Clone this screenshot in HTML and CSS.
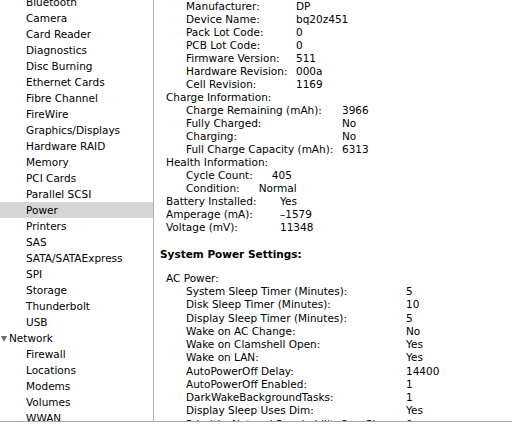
FILE: index.html
```html
<!DOCTYPE html>
<html>
<head>
<meta charset="utf-8">
<link rel="stylesheet" href="styles.css">
</head>
<body>
<div class="window">
  <ul class="sidebar">
    <li class="item">Bluetooth</li>
    <li class="item">Camera</li>
    <li class="item">Card Reader</li>
    <li class="item">Diagnostics</li>
    <li class="item">Disc Burning</li>
    <li class="item">Ethernet Cards</li>
    <li class="item">Fibre Channel</li>
    <li class="item">FireWire</li>
    <li class="item">Graphics/Displays</li>
    <li class="item">Hardware RAID</li>
    <li class="item">Memory</li>
    <li class="item">PCI Cards</li>
    <li class="item">Parallel SCSI</li>
    <li class="item selected">Power</li>
    <li class="item">Printers</li>
    <li class="item">SAS</li>
    <li class="item">SATA/SATAExpress</li>
    <li class="item">SPI</li>
    <li class="item">Storage</li>
    <li class="item">Thunderbolt</li>
    <li class="item">USB</li>
    <li class="item group"><span class="disclosure"></span>Network</li>
    <li class="item">Firewall</li>
    <li class="item">Locations</li>
    <li class="item">Modems</li>
    <li class="item">Volumes</li>
    <li class="item">WWAN</li>
  </ul>
  <div class="detail">
    <div class="grid g-info indent">
      <span>Manufacturer:</span><span>DP</span>
      <span>Device Name:</span><span>bq20z451</span>
      <span>Pack Lot Code:</span><span>0</span>
      <span>PCB Lot Code:</span><span>0</span>
      <span>Firmware Version:</span><span>511</span>
      <span>Hardware Revision:</span><span>000a</span>
      <span>Cell Revision:</span><span>1169</span>
    </div>
    <div class="row">Charge Information:</div>
    <div class="grid g-charge indent">
      <span>Charge Remaining (mAh):</span><span>3966</span>
      <span>Fully Charged:</span><span>No</span>
      <span>Charging:</span><span>No</span>
      <span>Full Charge Capacity (mAh):</span><span>6313</span>
    </div>
    <div class="row">Health Information:</div>
    <div class="pair indent"><span>Cycle Count:</span><span>405</span></div>
    <div class="pair indent"><span>Condition:</span><span>Normal</span></div>
    <div class="grid g-battery">
      <span>Battery Installed:</span><span>Yes</span>
      <span>Amperage (mA):</span><span>&#8211;1579</span>
      <span>Voltage (mV):</span><span>11348</span>
    </div>
    <div class="heading">System Power Settings:</div>
    <div class="row">AC Power:</div>
    <div class="grid g-power indent">
      <span>System Sleep Timer (Minutes):</span><span>5</span>
      <span>Disk Sleep Timer (Minutes):</span><span>10</span>
      <span>Display Sleep Timer (Minutes):</span><span>5</span>
      <span>Wake on AC Change:</span><span>No</span>
      <span>Wake on Clamshell Open:</span><span>Yes</span>
      <span>Wake on LAN:</span><span>Yes</span>
      <span>AutoPowerOff Delay:</span><span>14400</span>
      <span>AutoPowerOff Enabled:</span><span>1</span>
      <span>DarkWakeBackgroundTasks:</span><span>1</span>
      <span>Display Sleep Uses Dim:</span><span>Yes</span>
      <span>PrioritizeNetworkReachabilityOverSleep:</span><span>0</span>
    </div>
  </div>
</div>
</body>
</html>
```

FILE: styles.css
```css
html, body {
  margin: 0;
  padding: 0;
  background: #ffffff;
}

body {
  font-family: "DejaVu Sans", "Lucida Grande", sans-serif;
  font-size: 10.5px;
  color: #000000;
}

.window {
  display: flex;
  width: 512px;
  height: 421px;
  border-bottom: 1px solid #a9a9a9;
  overflow: hidden;
}

.sidebar {
  list-style: none;
  margin: -6px 0 0 0;
  padding: 0;
  width: 153px;
  flex: none;
  border-right: 1px solid #b5b5b5;
}

.item {
  height: 16px;
  line-height: 16px;
  padding-left: 26px;
  white-space: nowrap;
}

.item.selected {
  background: #d5d5d5;
}

.item.group {
  padding-left: 1px;
  display: flex;
  align-items: center;
}

.disclosure {
  width: 0;
  height: 0;
  border-left: 3.5px solid transparent;
  border-right: 3.5px solid transparent;
  border-top: 6px solid #6e6e6e;
  margin-right: 2px;
  margin-top: 1px;
}

.detail {
  flex: 1;
  padding-left: 12px;
  line-height: 13px;
  white-space: nowrap;
}

.indent {
  margin-left: 20px;
}

.row {
  height: 13px;
}

.grid {
  display: grid;
  grid-auto-rows: 13px;
}

.g-info { grid-template-columns: 110px auto; }
.g-charge { grid-template-columns: 156px auto; }
.g-battery { grid-template-columns: 114px auto; }
.g-power {
  grid-template-columns: 220px auto;
  grid-auto-rows: 13.25px;
}

.pair {
  display: flex;
  gap: 19px;
  height: 13px;
}

.heading {
  font-weight: bold;
  margin: 14px 0 11px -6px;
  height: 13px;
}
```
